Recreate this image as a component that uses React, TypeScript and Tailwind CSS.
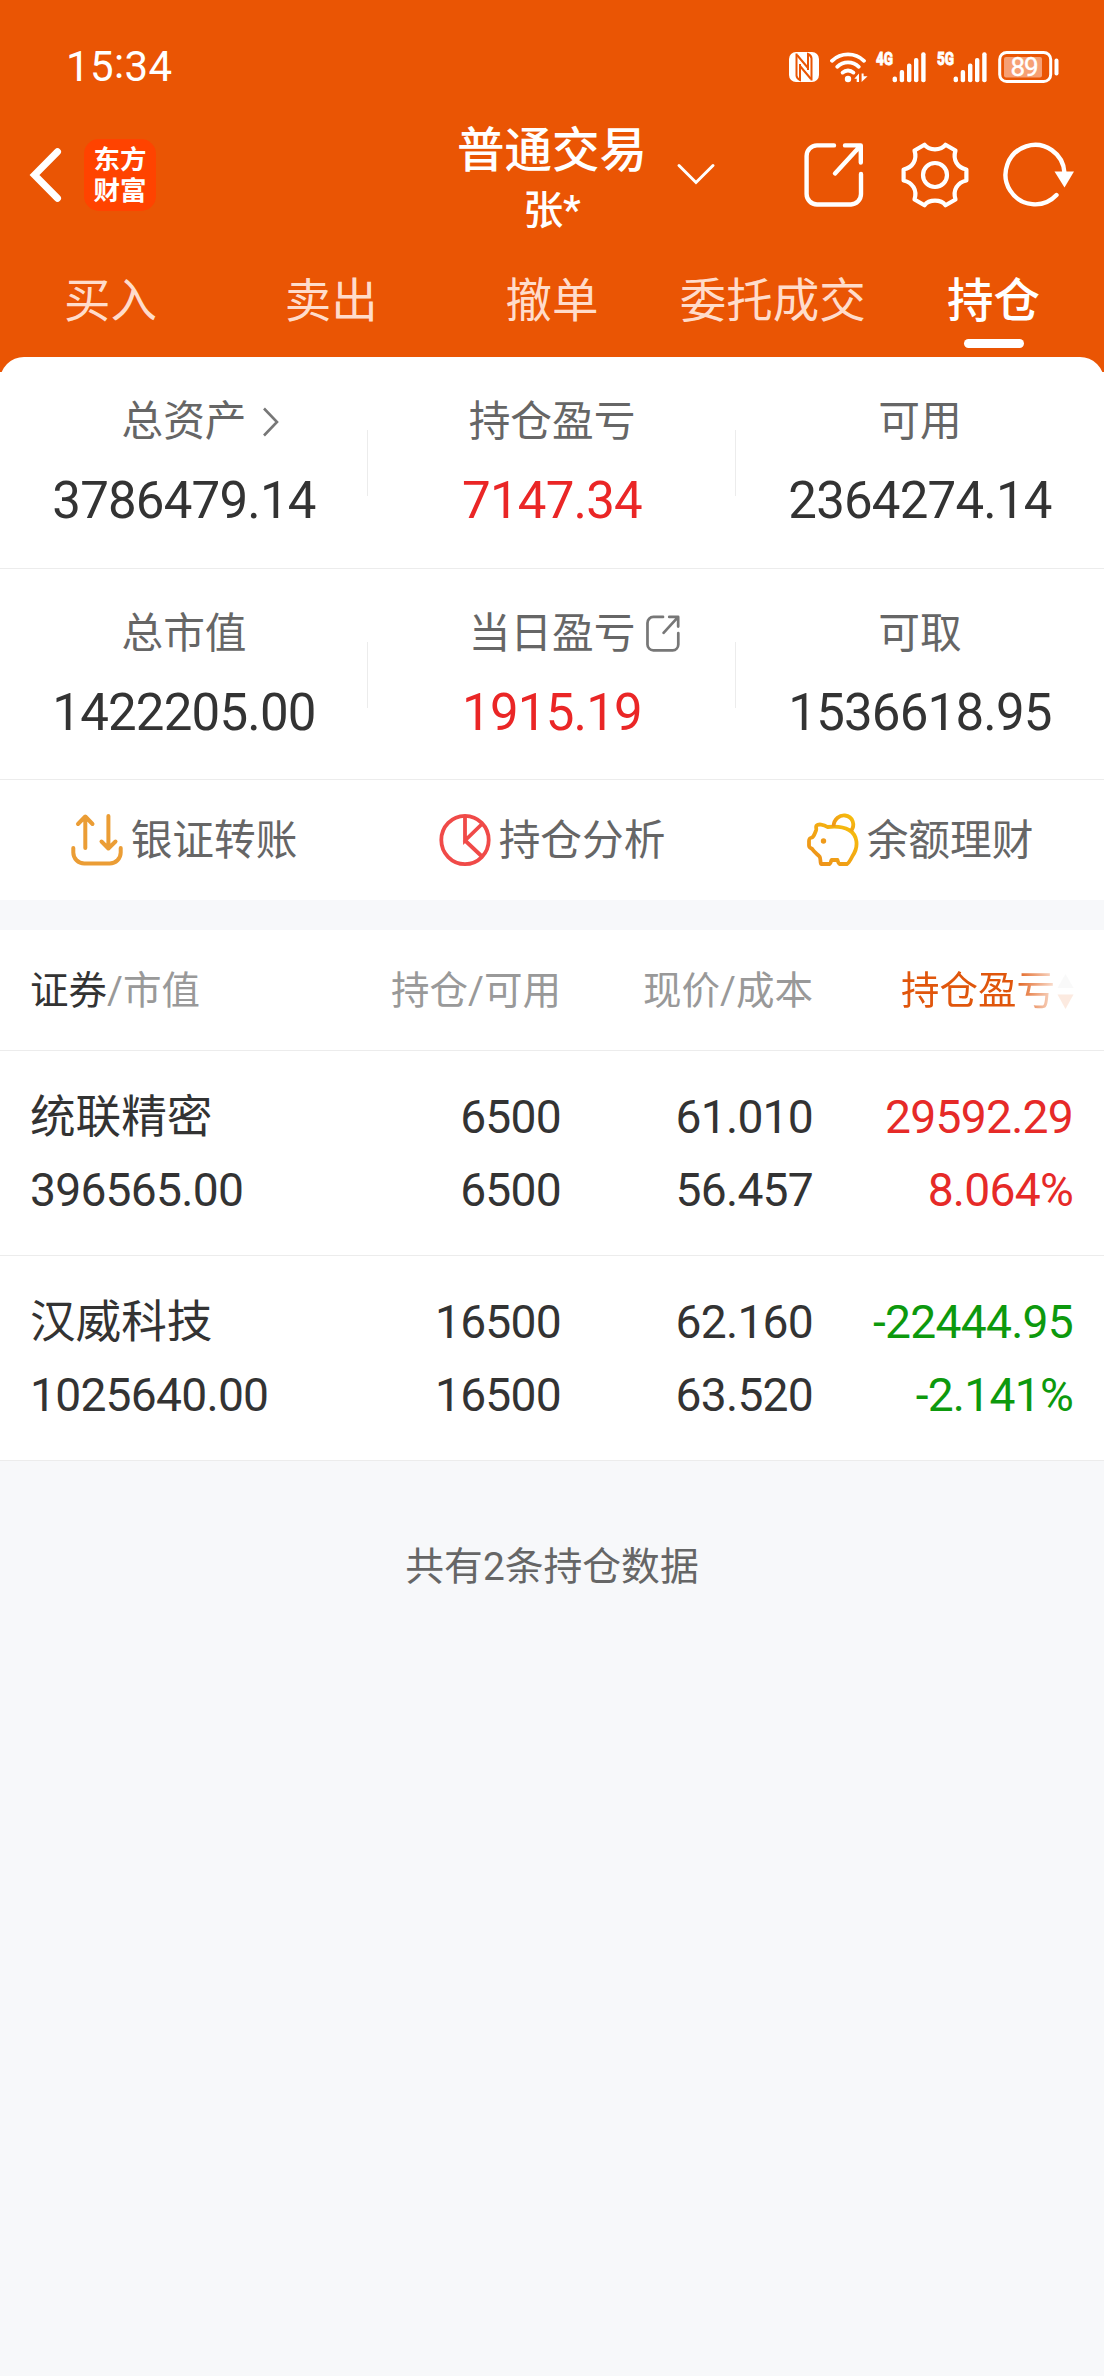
import type { ReactNode } from "react";

const TABS = ["买入", "卖出", "撤单", "委托成交", "持仓"];

type Holding = {
  name: string;
  value: string;
  qty: string;
  usable: string;
  price: string;
  cost: string;
  profit: string;
  percent: string;
  up: boolean;
};

const HOLDINGS: Holding[] = [
  { name: "统联精密", value: "396565.00", qty: "6500", usable: "6500", price: "61.010", cost: "56.457", profit: "29592.29", percent: "8.064%", up: true },
  { name: "汉威科技", value: "1025640.00", qty: "16500", usable: "16500", price: "62.160", cost: "63.520", profit: "-22444.95", percent: "-2.141%", up: false },
];

function SignalIcon({ label }: { label: string }) {
  return (
    <svg className="overflow-visible" width="50" height="32" viewBox="0 0 50 32" fill="#fff">
      <text x="0" y="14.200" fontSize="18.500" fontWeight="800" fontFamily="Roboto, sans-serif" textLength="17" lengthAdjust="spacingAndGlyphs" stroke="#fff" strokeWidth="0.9">
        {label}
      </text>
      <rect x="16.600" y="25.400" width="4.400" height="5.800" rx="2" />
      <rect x="23.700" y="19" width="4.400" height="12.200" rx="2" />
      <rect x="31" y="12.600" width="4.400" height="18.600" rx="2" />
      <rect x="38" y="7" width="4.400" height="24.200" rx="2" />
      <rect x="45.200" y="1.200" width="4.400" height="30" rx="2" />
    </svg>
  );
}

function StatusBar() {
  return (
    <div className="flex h-[97px] items-end justify-between pl-[66px] pr-[45px]">
      <span className="text-[42px] leading-[60px] tracking-[0.4px]">15<span className="relative -top-[3px]">:</span>34</span>
      <div className="flex h-[60px] items-center">
        <svg width="30" height="30" viewBox="0 0 30 30">
          <rect width="30" height="30" rx="7" fill="#fff" />
          <g fill="none" stroke="#ea5504" strokeWidth="2">
            <path d="M7.500 1.500v22c0 2 1.500 3.500 3.500 4.500V12" />
            <path d="M22.500 28.500v-22c0-2-1.500-3.500-3.500-4.500v16" />
            <path d="M8 3l11 13M11 14l11 13" />
          </g>
        </svg>
        <svg className="ml-[11px]" width="38" height="32" viewBox="0 0 38 32" fill="none" stroke="#fff" strokeWidth="3.8" strokeLinecap="round">
          <path d="M2 9.8a23 23 0 0 1 32 0" />
          <path d="M7.2 15.8a15.5 15.5 0 0 1 21.6 0" />
          <path d="M12.6 21.6a8 8 0 0 1 10.8 0" />
          <circle cx="18" cy="28" r="3.2" fill="#fff" stroke="none" />
          <path d="M29 22.5v8.5h-2.3v-3.3h-2.4zM31.6 31v-8.5h2v2.8h4z" fill="#fff" stroke="none" />
        </svg>
        <span className="ml-[8px]"><SignalIcon label="4G" /></span>
        <span className="ml-[11px]"><SignalIcon label="5G" /></span>
        <svg className="ml-[11px]" width="61" height="32" viewBox="0 0 61 32">
          <rect x="1.7" y="1.5" width="51" height="29" rx="7" fill="none" stroke="#fff" strokeWidth="3" />
          <rect x="6" y="6" width="38" height="20.5" rx="2" fill="#f6a075" />
          <rect x="56.500" y="7.5" width="4" height="17" rx="1.9" fill="#fff" />
          <text x="26.6" y="25" textAnchor="middle" fontSize="26" fontFamily="Roboto, sans-serif" fill="#fff" stroke="#fff" strokeWidth="0.4" textLength="28">
            89
          </text>
        </svg>
      </div>
    </div>
  );
}

function ShareIcon({ size, stroke }: { size: number; stroke: number }) {
  return (
    <svg width={size} height={size * 1.1} viewBox="0 0 60 66" fill="none" stroke="currentColor" strokeWidth={stroke} strokeLinecap="round" strokeLinejoin="round">
      <path d="M30 3.400H13A10.500 10.500 0 0 0 2.600 14v38A10.500 10.500 0 0 0 13 62.500h34A10.500 10.500 0 0 0 57 52V32" />
      <path d="M41 3.400h15.800V20.500M56 4.200L31 31.500" />
    </svg>
  );
}

function GearIcon() {
  return (
    <svg width="68" height="66" viewBox="0 0 68 66" fill="none" stroke="#fff" strokeWidth="4.200" strokeLinejoin="round">
      <circle cx="34" cy="33" r="12" />
      <path d="M23.500 2.800C28 8.800 40 8.800 44.500 2.800L54.500 8.500C51.500 18 56.500 25.500 65.400 27.500v11C56.500 40.500 51.500 48 54.500 57.500L44.500 63.200C40 57.200 28 57.200 23.500 63.200L13.500 57.500C16.500 48 11.500 40.500 2.600 38.500v-11C11.500 25.500 16.500 18 13.500 8.500z" />
    </svg>
  );
}

function RefreshIcon() {
  return (
    <svg width="72" height="66" viewBox="0 0 72 66">
      <path d="M53.500 53A29.500 29.700 0 1 1 61.500 31" fill="none" stroke="#fff" strokeWidth="4.400" strokeLinecap="round" />
      <path d="M51.500 29.500h19.500L61.500 45.500z" fill="#fff" />
    </svg>
  );
}

function TitleBar() {
  return (
    <div className="grid h-[156px] grid-cols-[1fr_auto_1fr] items-center">
      <div className="flex items-center pl-[29px]">
        <svg width="34" height="56" viewBox="0 0 34 56" fill="none" stroke="#fff" strokeWidth="7" strokeLinecap="round" strokeLinejoin="miter">
          <path d="M28.500 4.800L5.500 28l23 23.200" />
        </svg>
        <div className="ml-[21px] flex h-[72px] w-[72px] flex-col items-center justify-center rounded-[15px] bg-[#ff4300] text-[26.500px] font-bold leading-[31px]">
          <span>东方</span>
          <span>财富</span>
        </div>
      </div>
      <div className="relative mt-[12px] flex flex-col items-center font-medium">
        <span className="text-[47.500px] leading-[60px]">普通交易</span>
        <span className="text-[40px] leading-[60px]">张*</span>
        <svg className="absolute left-[219px] top-[41px]" width="40" height="24" viewBox="0 0 40 24" fill="none" stroke="#fff" strokeWidth="3" strokeLinecap="round">
          <path d="M3 3.500L20 20.500 37 3.500" />
        </svg>
      </div>
      <div className="flex items-center justify-end pr-[29px]">
        <ShareIcon size={60} stroke={4.4} />
        <span className="ml-[37px]"><GearIcon /></span>
        <span className="ml-[34px]"><RefreshIcon /></span>
      </div>
    </div>
  );
}

function TabBar() {
  return (
    <div className="grid grid-cols-5 pt-[11px]">
      {TABS.map((tab) => {
        const active = tab === "持仓";
        return (
          <div key={tab} className="flex flex-col items-center">
            <span className={active ? "text-[46.500px] font-medium leading-[75px]" : "text-[46.500px] leading-[75px] text-[#ffdccb]"}>{tab}</span>
            {active && <span className="h-[9px] w-[60px] rounded-full bg-white" />}
          </div>
        );
      })}
    </div>
  );
}

function Stat({ label, value, red, extra, divider }: { label: string; value: string; red?: boolean; extra?: ReactNode; divider?: boolean }) {
  return (
    <div className="relative flex flex-col items-center pt-[35px]">
      <span className="relative text-[41.700px] leading-[60px] text-[#666]">
        {label}
        {extra}
      </span>
      <span className={red ? "mt-[19px] text-[51px] leading-[60px] tracking-[-0.8px] text-[#ea2626]" : "mt-[19px] text-[51px] leading-[60px] tracking-[-0.8px] text-[#333]"}>{value}</span>
      {divider && <span className="absolute right-0 top-[73px] h-[66px] w-px bg-[#ececec]" />}
    </div>
  );
}

function Action({ icon, label }: { icon: ReactNode; label: string }) {
  return (
    <div className="flex items-center justify-center gap-[8px] text-[41.700px] text-[#666]">
      {icon}
      <span className="pt-[2px] leading-[60px]">{label}</span>
    </div>
  );
}

const TransferIcon = (
  <svg width="52" height="54" viewBox="0 0 52 54" fill="none" stroke="#eb9d35" strokeWidth="4" strokeLinecap="round" strokeLinejoin="round">
    <path d="M2.300 35v4.500A11 11 0 0 0 13.300 50.500h25.400A11 11 0 0 0 49.700 39.500V35" />
    <path d="M14.300 35V4M7 11l7.300-7.500L21.500 11M37.400 3v31.500M30.500 28.500l6.900 7 7.100-7" />
  </svg>
);

const PieIcon = (
  <svg width="52" height="54" viewBox="0 0 52 54" fill="none" stroke="#f04a48" strokeWidth="3.800">
    <ellipse cx="26" cy="27" rx="23.700" ry="24.200" />
    <path d="M26 3v24.500L43.500 10.500M25 26.500l18.500 17.500" />
  </svg>
);

const PiggyIcon = (
  <svg width="52" height="54" viewBox="0 0 52 54">
    <defs>
      <linearGradient id="piggy" x1="1" y1="0" x2="0" y2="1">
        <stop offset="0" stopColor="#f7c00c" />
        <stop offset="1" stopColor="#ec8d1c" />
      </linearGradient>
    </defs>
    <g fill="none" stroke="url(#piggy)" strokeWidth="3.800" strokeLinejoin="round">
      <path d="M20.500 14C16.500 11 11 11 9.500 12.500c-1 1.500.3 3-.5 5C7.500 21 7 23.500 5 24.500 2.800 25 2 25.500 2 28v4.500c0 2 1.500 2.500 3 3.300C7 39 10 41 12.500 43.500c1.500 2 .5 5.500 1.500 7.500h8.500c1.500-.8 1.500-3.500 2-4h6c.5 1.500.8 3.500 2 4H40c2-1 4-5 5.500-8C52 33.500 50.500 22 42 17 36 13.500 29 13 20.500 14z" />
      <path d="M26.500 13.500C27 5.500 33 2 38 2.500 46 3.500 48.500 12 44 18" />
    </g>
    <circle cx="16.500" cy="28" r="2.700" fill="#ef9a1a" />
  </svg>
);

function HoldingRow({ item }: { item: Holding }) {
  const tone = item.up ? "text-right text-[#e62a28]" : "text-right text-[#0d990d]";
  return (
    <div className="grid h-[205px] grid-cols-[281px_250px_252px_260px] content-start border-b border-[#ececec] pl-[30px] pt-[30px] text-[46.200px] leading-[73px] tracking-[-0.750px] text-[#333]">
      <span className="text-[45.600px] tracking-normal">{item.name}</span>
      <span className="text-right">{item.qty}</span>
      <span className="text-right">{item.price}</span>
      <span className={tone}>{item.profit}</span>
      <span>{item.value}</span>
      <span className="text-right">{item.usable}</span>
      <span className="text-right">{item.cost}</span>
      <span className={tone}>{item.percent}</span>
    </div>
  );
}

export default function App() {
  return (
    <div className="min-h-[2376px] w-[1104px] bg-[#f7f8fa] font-['Roboto','Noto_Sans_CJK_SC',sans-serif]">
      <div className="bg-white">
        <header className="h-[372px] bg-[#ea5504] text-white">
          <StatusBar />
          <TitleBar />
          <TabBar />
        </header>

        <section className="-mt-[15px] rounded-t-[24px] bg-white">
          <div className="grid h-[212px] grid-cols-3 border-b border-[#ececec]">
            <Stat
              label="总资产"
              value="3786479.14"
              divider
              extra={
                <svg className="absolute left-[141px] top-[14px]" width="20" height="32" viewBox="0 0 20 32" fill="none" stroke="#777" strokeWidth="2.600">
                  <path d="M2 2.500L15 16 2 29.500" />
                </svg>
              }
            />
            <Stat label="持仓盈亏" value="7147.34" red divider />
            <Stat label="可用" value="2364274.14" />
          </div>
          <div className="grid h-[211px] grid-cols-3 border-b border-[#ececec]">
            <Stat label="总市值" value="1422205.00" divider />
            <Stat
              label="当日盈亏"
              value="1915.19"
              red
              divider
              extra={
                <span className="absolute left-[177px] top-[11px] text-[#777]">
                  <ShareIcon size={34} stroke={4.8} />
                </span>
              }
            />
            <Stat label="可取" value="1536618.95" />
          </div>
          <div className="grid h-[120px] grid-cols-3">
            <Action icon={TransferIcon} label="银证转账" />
            <Action icon={PieIcon} label="持仓分析" />
            <Action icon={PiggyIcon} label="余额理财" />
          </div>
        </section>
      </div>

      <section className="mt-[30px] bg-white">
        <div className="grid h-[121px] grid-cols-[281px_250px_252px_261px] items-center border-b border-[#ececec] pl-[30px] pt-[1px] text-[38.500px] leading-[60px] text-[#999]">
          <span>
            <span className="text-[#333]">证券</span>/市值
          </span>
          <span className="text-right">持仓/可用</span>
          <span className="text-right">现价/成本</span>
          <span className="flex items-center justify-end gap-[2px] text-[#e0560c] [mask-image:linear-gradient(to_right,black_200px,rgba(0,0,0,0.12)_245px)]">
            持仓盈亏
            <svg width="17" height="36" viewBox="0 0 17 36">
              <path d="M8.500 1L16.500 15H.5z" fill="#ccc" />
              <path d="M8.500 36L16.500 21.500H.5z" fill="#ea5504" />
            </svg>
          </span>
        </div>
        {HOLDINGS.map((item) => (
          <HoldingRow key={item.name} item={item} />
        ))}
      </section>

      <p className="pt-[76px] text-center text-[38.800px] leading-[60px] text-[#666]">共有2条持仓数据</p>
    </div>
  );
}
